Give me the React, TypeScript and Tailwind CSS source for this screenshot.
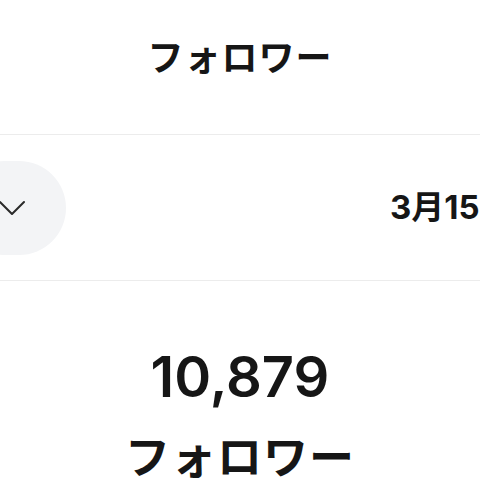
import React from 'react';

const JP = "font-['Noto_Sans_CJK_JP',sans-serif]";
const NUM = "font-['Inter','Noto_Sans_CJK_JP',sans-serif]";

const ChevronDown: React.FC = () => (
  <svg width="26" height="16" viewBox="0 0 26 16" fill="none" className="text-[#2a2a2a]">
    <polyline points="1,2 13,14 25,2" stroke="currentColor" strokeWidth="2" strokeLinecap="round" strokeLinejoin="round" />
  </svg>
);

const App: React.FC = () => {
  return (
    <div className="w-[480px] h-[480px] overflow-hidden bg-white text-[#161616]">
      {/* Header */}
      <header className="h-[134px] pt-[37px] flex justify-center">
        <h1 className={`${JP} text-[36px] leading-none font-semibold tracking-[1px]`}>フォロワー</h1>
      </header>

      {/* Period selector row */}
      <div className="h-[147px] border-y border-[#ececec] flex items-center">
        <button className="-ml-[42px] w-[108px] h-[94px] rounded-full bg-[#f3f4f6] flex items-center justify-center">
          <ChevronDown />
        </button>
        <div className="ml-auto w-[90px]">
          <span className={`${NUM} block whitespace-nowrap text-[33px] leading-none font-bold`}>3月15日 - 4月14日</span>
        </div>
      </div>

      {/* Follower count */}
      <section className="pt-[68px] flex flex-col items-center">
        <div className={`${NUM} text-[56px] leading-none font-semibold`}>10,879</div>
        <div className={`${JP} mt-[29px] text-[45px] leading-[42px] font-semibold tracking-[1px]`}>フォロワー</div>
      </section>
    </div>
  );
};

export default App;
